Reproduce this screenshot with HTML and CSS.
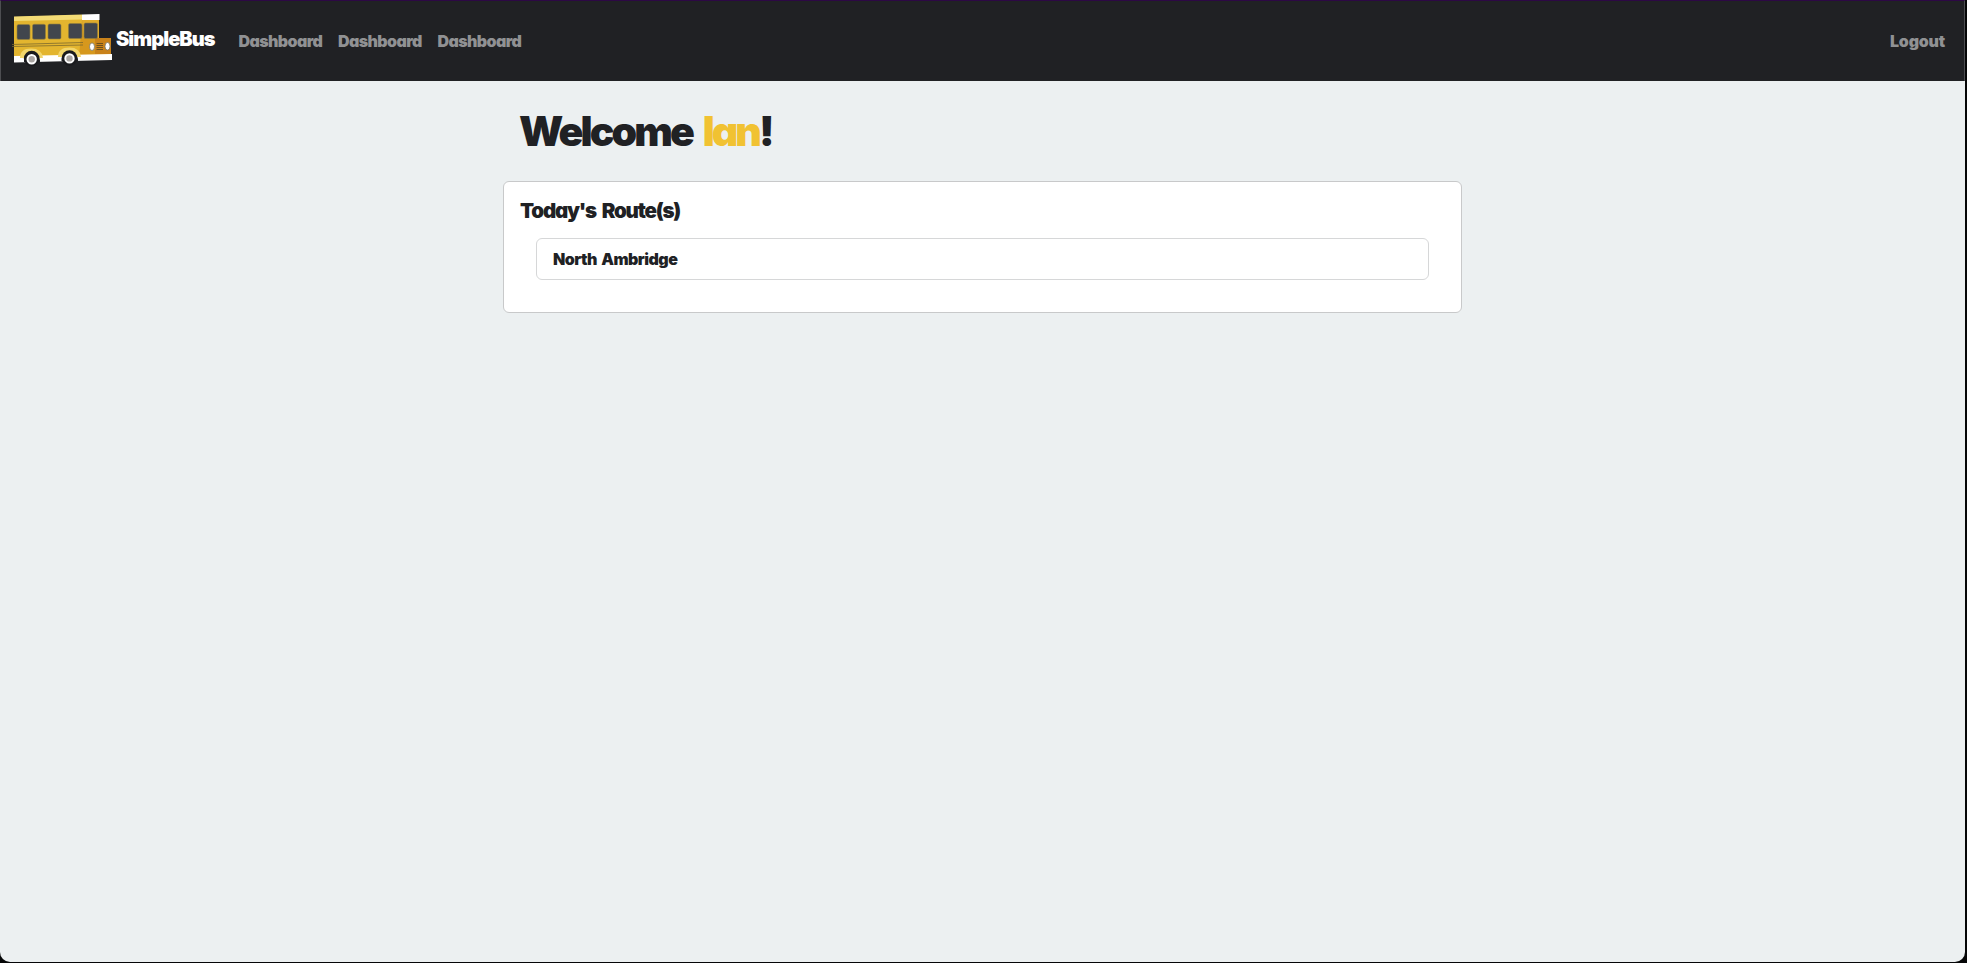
FILE: index.html
```html
<!DOCTYPE html>
<html lang="en">
<head>
<meta charset="utf-8">
<title>SimpleBus</title>
<link rel="stylesheet" href="styles.css">
</head>
<body>
<div class="window">
  <nav class="navbar">
    <a class="brand">
      <svg class="bus" width="104" height="58" viewBox="11 10 104 58">
        <path d="M14 17L82 15V56L14 61Z" fill="#e3b52f"/>
        <path d="M14 16.5L82 14.5V19.5L14 21Z" fill="#f3db75"/>
        <path d="M82 20H99V38L111 39V56L79 58Z" fill="#d6981d"/>
        <path d="M82 14.5L99.500 14V20H82Z" fill="#fff"/>
        <path d="M82 20H99V38H84Z" fill="#e0ac2b"/>
        <path d="M95 38H111V54H95Z" fill="#c9821a"/>
        <path d="M14 56L112 54V60L14 62.500Z" fill="#fff"/>
        <path d="M20 58Q20 48.500 31 48.500Q42 48.500 43 58ZM58 57Q58 47.500 69.500 47.500Q80 47.500 81 57Z" fill="#f2d66b"/>
        <g fill="#41464d" stroke="#94803e" stroke-width=".6">
          <rect x="17" y="24.500" width="13" height="15" rx="1.500"/>
          <rect x="32.500" y="24.300" width="13" height="15" rx="1.500"/>
          <rect x="48" y="24" width="13" height="15" rx="1.500"/>
          <rect x="68.500" y="23.500" width="13.500" height="15" rx="1.500"/>
          <rect x="84" y="23" width="13.500" height="15.500" rx="1.500"/>
        </g>
        <path d="M12 44.500L83 42.500M12 46.500L83 45" stroke="#7c6a2c" stroke-width=".8" fill="none"/>
        <path d="M24 60A8.500 9.500 0 0 1 40 60V62H24ZM61.500 59A8.500 9.500 0 0 1 78 59V61H61.500Z" fill="#202124"/>
        <circle cx="31.700" cy="58.500" r="7.800" fill="#191a1d"/>
        <circle cx="69.500" cy="58" r="7.800" fill="#191a1d"/>
        <circle cx="31.700" cy="59.200" r="4.200" fill="#aaa6a3" stroke="#fff" stroke-width="2"/>
        <circle cx="69.500" cy="58.400" r="4.200" fill="#aaa6a3" stroke="#fff" stroke-width="2"/>
        <path d="M96.500 43.500H103M96.500 45.500H103M96.500 47.500H103M96.500 49.500H103" stroke="#6c501e" stroke-width="1"/>
        <ellipse cx="92" cy="46.700" rx="2.500" ry="3.800" fill="#fff" stroke="#77736a" stroke-width=".8"/>
        <ellipse cx="107.500" cy="46.300" rx="2.500" ry="3.800" fill="#fff" stroke="#77736a" stroke-width=".8"/>
      </svg>
      <span class="brand-name">SimpleBus</span>
    </a>
    <div class="links"><a>Dashboard</a><a>Dashboard</a><a>Dashboard</a></div>
    <a class="logout">Logout</a>
  </nav>
  <main class="content">
    <h1 class="welcome">Welcome <span class="name">Ian</span>!</h1>
    <section class="card">
      <h2 class="card-title">Today's Route(s)</h2>
      <div class="route">North Ambridge</div>
    </section>
  </main>
</div>
</body>
</html>
```
FILE: styles.css
```css
* { box-sizing: border-box; }
body {
  margin: 0;
  height: 963px;
  background: #050607;
  color: #202124;
  font-family: Inter, "Open Sans", sans-serif;
  font-weight: 900;
  font-feature-settings: "cv11";
  white-space: nowrap;
  overflow: hidden;
}
.window {
  width: 1965px;
  height: 962px;
  background: #ecf0f1;
  border-radius: 0 0 10px 10px;
  overflow: hidden;
}
.navbar {
  display: flex;
  height: 81px;
  padding: 0 19px 0 10px;
  background: #202124;
  border-top: 1px solid #2c0844;
  border-right: 1px solid #4d4e51;
  border-left: 1px solid #4d4e51;
}
.brand { display: flex; width: 227.500px; padding-top: 9px; color: #fff; }
.bus { flex: none; }
.brand-name {
  margin: 17px 0 0 1px;
  font-size: 20px;
  line-height: 24px;
  letter-spacing: -.950px;
}
.links, .logout {
  margin-top: 28px;
  color: #909193;
  font-size: 16px;
  line-height: 24px;
  letter-spacing: -.600px;
}
.links { display: flex; }
.links a { width: 99.500px; }
.logout { margin-left: auto; letter-spacing: -.200px; }
.content { width: 959px; margin-left: 503px; padding-top: 26px; }
.welcome {
  margin: 0;
  padding-left: 16px;
  font-size: 41px;
  font-weight: 900;
  line-height: 48px;
  letter-spacing: -2.900px;
  word-spacing: 5.500px;
}
.name { color: #f1c232; }
.card {
  height: 132px;
  margin-top: 26px;
  padding: 17px 32px 0;
  background: #fff;
  border: 1px solid #c8c9ca;
  border-radius: 6px;
}
.card-title {
  margin: 0 0 15px -16px;
  font-size: 20.500px;
  font-weight: 900;
  line-height: 24px;
  letter-spacing: -1.200px;
  word-spacing: 3px;
}
.route {
  height: 42px;
  padding: 8px 16px;
  border: 1px solid #d6d7d8;
  border-radius: 6px;
  font-size: 16px;
  line-height: 24px;
  letter-spacing: -.500px;
  word-spacing: 1.500px;
}
```
